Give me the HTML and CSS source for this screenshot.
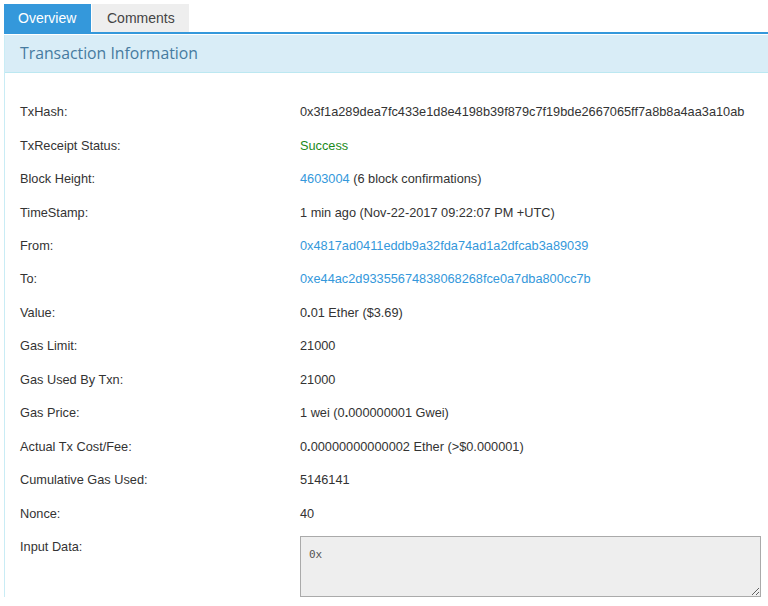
FILE: index.html
```html
<!DOCTYPE html>
<html>
<head>
<meta charset="utf-8">
<link rel="stylesheet" href="styles.css">
</head>
<body>
<div class="page">
  <ul class="tabs">
    <li class="tab active">Overview</li>
    <li class="tab">Comments</li>
  </ul>
  <div class="panel">
    <div class="panel-heading">Transaction Information</div>
    <div class="panel-body">
      <div class="row"><div class="label">TxHash:</div><div class="value">0x3f1a289dea7fc433e1d8e4198b39f879c7f19bde2667065ff7a8b8a4aa3a10ab</div></div>
      <div class="row"><div class="label">TxReceipt Status:</div><div class="value success">Success</div></div>
      <div class="row"><div class="label">Block Height:</div><div class="value"><a class="link">4603004</a> (6 block confirmations)</div></div>
      <div class="row"><div class="label">TimeStamp:</div><div class="value">1 min ago (Nov-22-2017 09:22:07 PM +UTC)</div></div>
      <div class="row"><div class="label">From:</div><div class="value"><a class="link">0x4817ad0411eddb9a32fda74ad1a2dfcab3a89039</a></div></div>
      <div class="row"><div class="label">To:</div><div class="value"><a class="link">0xe44ac2d93355674838068268fce0a7dba800cc7b</a></div></div>
      <div class="row"><div class="label">Value:</div><div class="value">0<b>.</b>01 Ether ($3.69)</div></div>
      <div class="row"><div class="label">Gas Limit:</div><div class="value">21000</div></div>
      <div class="row"><div class="label">Gas Used By Txn:</div><div class="value">21000</div></div>
      <div class="row"><div class="label">Gas Price:</div><div class="value">1 wei (0<b>.</b>000000001 Gwei)</div></div>
      <div class="row"><div class="label">Actual Tx Cost/Fee:</div><div class="value">0<b>.</b>00000000000002 Ether (&gt;$0.000001)</div></div>
      <div class="row"><div class="label">Cumulative Gas Used:</div><div class="value">5146141</div></div>
      <div class="row"><div class="label">Nonce:</div><div class="value">40</div></div>
      <div class="row input-row"><div class="label">Input Data:</div><div class="value"><textarea class="input-data" readonly>0x</textarea></div></div>
    </div>
  </div>
</div>
</body>
</html>
```

FILE: styles.css
```css
html, body {
  margin: 0;
  padding: 0;
  background: #fff;
}
body {
  font-family: "Liberation Sans", Arial, sans-serif;
  font-size: 12.75px;
  color: #333;
  overflow: hidden;
}
.page {
  padding: 4px 0 0 4px;
}
.tabs {
  list-style: none;
  margin: 0;
  padding: 0;
  display: flex;
  gap: 1px;
  border-bottom: 2px solid #3498db;
}
.tab {
  height: 28px;
  line-height: 28px;
  padding: 0 15px;
  font-size: 14px;
  background: #eee;
  color: #444;
}
.tab.active {
  background: #3498db;
  color: #fff;
  padding: 0 14px;
  width: 59px;
}
.tab:not(.active) {
  width: 67px;
}
.panel {
  margin-top: 1px;
  border-left: 1px solid #c9ecf5;
}
.panel-heading {
  height: 37px;
  line-height: 37px;
  padding-left: 15px;
  background: #d9edf7;
  border-bottom: 1px solid #bce8f1;
  color: #467ba0;
  font-family: "Open Sans", sans-serif;
  font-size: 15.8px;
}
.panel-body {
  padding-top: 22px;
}
.row {
  display: flex;
  align-items: center;
  height: 33.46px;
}
.label {
  width: 280px;
  padding-left: 15px;
  flex: none;
}
.value {
  flex: 1;
}
.value b {
  font-weight: bold;
}
.success {
  color: #1a8a1a;
}
.link {
  color: #3498db;
  text-decoration: none;
}
.input-row {
  align-items: flex-start;
  height: auto;
}
.input-row .label {
  line-height: 33.46px;
}
.input-row .value {
  padding-top: 6px;
  padding-right: 7px;
}
.input-data {
  display: block;
  box-sizing: border-box;
  width: 100%;
  height: 61px;
  margin: 0;
  padding: 11px 8px;
  background: #eee;
  border: 1px solid #aaa;
  color: #555;
  font-family: "DejaVu Sans Mono", monospace;
  font-size: 11px;
  resize: both;
}
```
